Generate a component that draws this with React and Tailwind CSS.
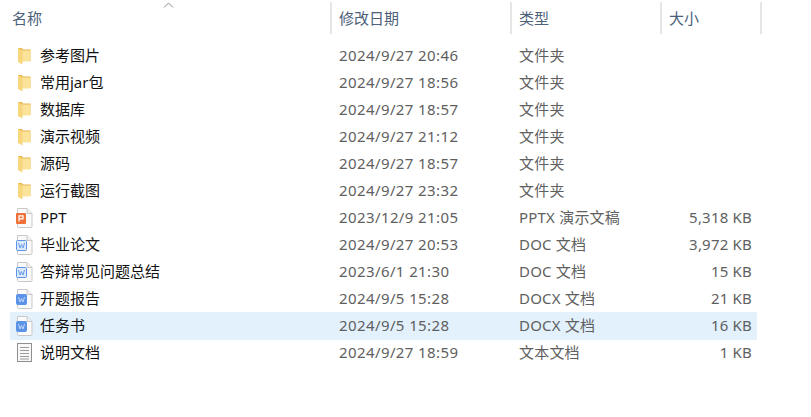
const font = { fontFamily: '"Noto Sans","Noto Sans CJK SC",sans-serif' };

function Folder() {
  return (
    <svg width="13" height="18" viewBox="0 0 13 18" className="shrink-0">
      <path d="M0 1 H4 L5 2.5 H12.5 V14 H0 Z" fill="#e9b84f" />
      <path d="M4 3.5 H12.5 V14.5 H4 Z" fill="#fbe39a" />
      <path d="M0 1 L4.5 3.5 V17.5 L0 15 Z" fill="#f7d67c" />
    </svg>
  );
}

function Page({ children, stroke = "#c8c8c8" }) {
  return (
    <svg width="17" height="20" viewBox="0 0 17 20" className="shrink-0">
      <path d="M1.5 .5 H11 L16 5.5 V18.5 Q16 19.5 15 19.5 H2.5 Q1.5 19.5 1.5 18.5 Z" fill="#fafafa" stroke={stroke} />
      <path d="M11 .5 V5.5 H16" fill="#efefef" stroke={stroke} />
      {children}
    </svg>
  );
}

function Ppt() {
  return (
    <Page>
      <rect x="0" y="5" width="10" height="11" rx="1" fill="#f0703a" />
      <path d="M3 13.5 V7.8 H7 V10.8 H3" fill="none" stroke="#fff" strokeWidth="1.2" />
    </Page>
  );
}

function Doc({ solid }) {
  return (
    <Page>
      <rect x=".5" y="5.5" width="10" height="10" rx="1" fill={solid ? "#5b93e8" : "#dce9fb"} stroke="#5b93e8" />
      <path d="M2.5 8 L4 13 L5.5 9.5 L7 13 L8.5 8" fill="none" stroke={solid ? "#c9dcf8" : "#5b93e8"} strokeWidth=".9" />
    </Page>
  );
}

function Txt() {
  return (
    <svg width="17" height="19" viewBox="0 0 17 19" className="shrink-0">
      <rect x="1.5" y=".5" width="14" height="18" fill="#f8f8f8" stroke="#8f8f8f" />
      <path d="M4 4.5 H13 M4 7.5 H13 M4 10.5 H13 M4 13.5 H13 M4 16 H13" stroke="#9a9a9a" strokeWidth="1" />
    </svg>
  );
}

const rows = [
  ["参考图片", "2024/9/27 20:46", "文件夹", "", <Folder />],
  ["常用jar包", "2024/9/27 18:56", "文件夹", "", <Folder />],
  ["数据库", "2024/9/27 18:57", "文件夹", "", <Folder />],
  ["演示视频", "2024/9/27 21:12", "文件夹", "", <Folder />],
  ["源码", "2024/9/27 18:57", "文件夹", "", <Folder />],
  ["运行截图", "2024/9/27 23:32", "文件夹", "", <Folder />],
  ["PPT", "2023/12/9 21:05", "PPTX 演示文稿", "5,318 KB", <Ppt />],
  ["毕业论文", "2024/9/27 20:53", "DOC 文档", "3,972 KB", <Doc />],
  ["答辩常见问题总结", "2023/6/1 21:30", "DOC 文档", "15 KB", <Doc />],
  ["开题报告", "2024/9/5 15:28", "DOCX 文档", "21 KB", <Doc solid />],
  ["任务书", "2024/9/5 15:28", "DOCX 文档", "16 KB", <Doc solid />],
  ["说明文档", "2024/9/27 18:59", "文本文档", "1 KB", <Txt />],
];

function Head({ className, children }) {
  return (
    <div className={`h-[32px] flex items-center border-r-2 border-[#e5e5e5] text-[#4c607a] ${className}`}>
      {children}
    </div>
  );
}

export default function App() {
  return (
    <div className="w-[811px] h-[417px] bg-white overflow-hidden text-[15px] leading-[20px]" style={font}>
      <div className="relative flex pt-[2px] h-[42px]">
        <Head className="w-[332px] pl-[12px]">名称</Head>
        <Head className="w-[180px] pl-[7px]">修改日期</Head>
        <Head className="w-[150px] pl-[7px]">类型</Head>
        <Head className="w-[100px] pl-[7px]">大小</Head>
        <svg width="12" height="6" viewBox="0 0 12 6" className="absolute left-[163px] top-[2px]">
          <path d="M1 5.5 L5.5 1 L10 5.5" fill="none" stroke="#8a8a8a" />
        </svg>
      </div>
      <div className="ml-[10px] w-[747px] flex flex-col">
        {rows.map(([name, date, type, size, icon]) => (
          <div key={name} className={name === "任务书" ? "h-[28px] mb-[-1px] pb-[1px] flex items-center bg-[#e3f1fd]" : "h-[27px] flex items-center"}>
            <div className="w-[322px] flex items-center gap-[6px] pl-[5px] text-[#111111]">
              <span className="w-[19px] flex justify-center">{icon}</span>
              <span className="pb-[2px]">{name}</span>
            </div>
            <div className="w-[180px] pl-[7px] pb-[2px] text-[#5f5f5f] tracking-[0.4px]">{date}</div>
            <div className="w-[150px] pl-[7px] pb-[2px] text-[#5f5f5f] tracking-[0.2px]">{type}</div>
            <div className="w-[90px] pb-[2px] text-right text-[#5f5f5f] tracking-[0.2px]">{size}</div>
          </div>
        ))}
      </div>
    </div>
  );
}
